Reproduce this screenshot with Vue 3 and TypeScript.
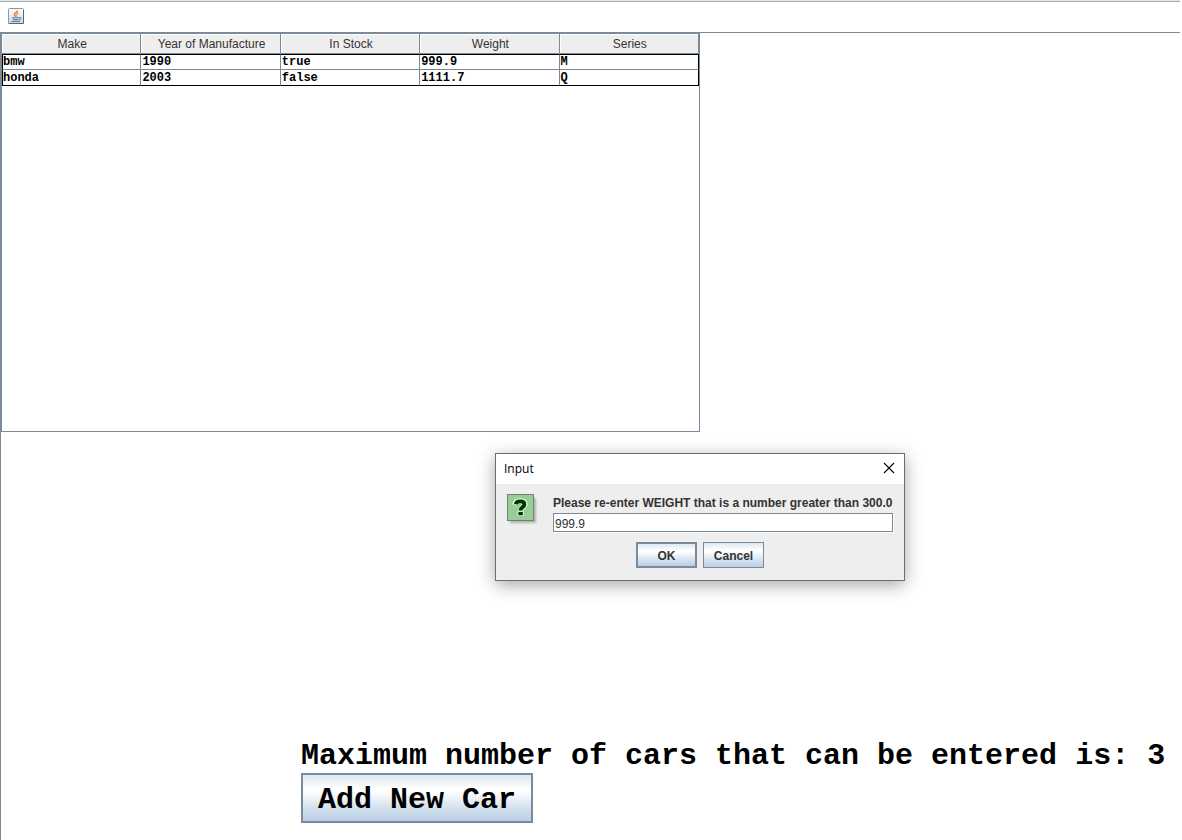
<script setup lang="ts">
import { ref } from 'vue'

interface Car {
  make: string
  year: number
  inStock: boolean
  weight: string
  series: string
}

const columns: string[] = ['Make', 'Year of Manufacture', 'In Stock', 'Weight', 'Series']

const cars: Car[] = [
  { make: 'bmw', year: 1990, inStock: true, weight: '999.9', series: 'M' },
  { make: 'honda', year: 2003, inStock: false, weight: '1111.7', series: 'Q' },
]

const maxCars = 3
const weight = ref('999.9')
</script>

<template>
  <div class="window">
    <header class="titlebar">
      <svg class="java" viewBox="0 0 16 16" aria-hidden="true">
        <defs>
          <linearGradient id="tile" x1="0" y1="0" x2="0" y2="1">
            <stop offset="0" stop-color="#ffffff" />
            <stop offset="1" stop-color="#c9d6e2" />
          </linearGradient>
        </defs>
        <rect x="0.5" y="0.5" width="15" height="15" rx="1" fill="url(#tile)" stroke="#8797a8" />
        <path d="M0.5 15.5h15V2" fill="none" stroke="#53697f" />
        <path d="M9.4 2.4C9.6 4.4 5.8 4.8 6.4 6.8C6.6 7.4 7.2 7.8 7.4 8.6" fill="none" stroke="#e07a28" stroke-width="1.5" />
        <path d="M10.6 4.6C8.6 5.4 8.2 6 8.8 6.8C9.1 7.3 8.8 7.9 8.4 8.6" fill="none" stroke="#ee9a4c" stroke-width="1.2" />
        <path d="M4 9.8h7M5 11.6h5.4M3.4 13.4h8.6M11 9.6c2.6-0.8 2.6 1.8-0.2 2.2" fill="none" stroke="#5a7590" stroke-width="1" />
      </svg>
    </header>

    <main class="content">
      <section class="scrollpane">
        <table class="cars">
          <thead>
            <tr>
              <th v-for="column in columns" :key="column" scope="col">{{ column }}</th>
            </tr>
          </thead>
          <tbody>
            <tr v-for="car in cars" :key="car.make">
              <td>{{ car.make }}</td>
              <td>{{ car.year }}</td>
              <td>{{ car.inStock }}</td>
              <td>{{ car.weight }}</td>
              <td>{{ car.series }}</td>
            </tr>
          </tbody>
        </table>
      </section>

      <footer class="actions">
        <p class="limit">Maximum number of cars that can be entered is: {{ maxCars }}</p>
        <button class="metal add" type="button">Add New Car</button>
      </footer>
    </main>

    <form class="dialog" role="dialog" aria-labelledby="dialog-title" @submit.prevent>
      <div class="dialog-bar">
        <span id="dialog-title">Input</span>
        <button class="close" type="button" aria-label="Close">
          <svg viewBox="0 0 12 12" aria-hidden="true">
            <path d="M1 1L11 11M11 1L1 11" fill="none" stroke="#000" stroke-width="1.1" />
          </svg>
        </button>
      </div>
      <div class="dialog-body">
        <svg class="question" viewBox="0 0 32 32" aria-hidden="true">
          <rect class="question-shadow" x="3" y="4" width="26" height="25" />
          <rect x="0.5" y="0.5" width="26" height="26" fill="#99cc99" stroke="#668866" />
          <g fill="none" stroke="#ccffcc">
            <path d="M8 10.6C8 7.8 10 7 13.4 7C16.8 7 18 8.4 18 10.4C18 13.2 13.6 13 13.6 17" stroke-width="5.4" />
            <path d="M13.6 17.2v4.6" stroke-width="6.4" />
          </g>
          <path d="M8.8 10.2C9.2 8 11 7.4 13.4 7.4C16.2 7.4 17.4 8.6 17.4 10.4C17.4 13 13.6 13 13.6 16.4" fill="none" stroke="#003300" stroke-width="3.8" />
          <rect x="11.4" y="18" width="4.4" height="3.2" fill="#003300" />
        </svg>
        <div class="field">
          <label for="weight">Please re-enter WEIGHT that is a number greater than 300.0</label>
          <input id="weight" v-model="weight" type="text" />
        </div>
      </div>
      <div class="dialog-buttons">
        <button class="metal ok" type="submit">OK</button>
        <button class="metal" type="button">Cancel</button>
      </div>
    </form>
  </div>
</template>

<style>
body {
  margin: 0;
  background: #fff;
}
</style>

<style scoped>
* {
  box-sizing: border-box;
}

.window {
  position: relative;
  display: flex;
  flex-direction: column;
  min-height: 100vh;
  margin-right: 2px;
  background: #fff;
  color: #333;
  font-family: "Liberation Sans", Arial, sans-serif;
  font-size: 12px;
}

.titlebar {
  height: 32px;
  padding: 7px 8px;
  border-top: 1px solid #e6e6e6;
  box-shadow: inset 0 1px #aaa;
}

.java {
  display: block;
  width: 16px;
  height: 16px;
}

.content {
  flex: 1;
  display: flex;
  flex-direction: column;
  border-top: 1px solid #7a8a99;
  border-left: 1px solid #7a8a99;
}

.scrollpane {
  width: 699px;
  max-width: 100%;
  min-height: 399px;
  border: 1px solid #7a8a99;
}

.cars {
  width: 100%;
  table-layout: fixed;
  border-collapse: separate;
  border-spacing: 0;
}

.cars th {
  height: 20px;
  padding: 1px 0 0 2px;
  border-right: 1px solid #7a8a99;
  border-bottom: 1px solid #7a8a99;
  background: #eee;
  box-shadow: inset 1px 1px #fff;
  font-weight: normal;
  line-height: 18px;
}

.cars td {
  height: 16px;
  padding: 0 1px;
  border-right: 1px solid #7a8a99;
  border-bottom: 1px solid #7a8a99;
  color: #000;
  font: bold 12px/14px "Liberation Mono", "Courier New", monospace;
}

.cars tbody tr:first-child td {
  border-top: 1px solid #000;
}

.cars tbody tr:last-child td {
  border-bottom-color: #000;
}

.cars td:first-child {
  padding-left: 0;
  border-left: 1px solid #000;
}

.cars td:last-child {
  border-right-color: #000;
}

.actions {
  margin-top: auto;
  padding: 0 0 17px 300px;
  color: #000;
  font: bold 30px/34px "Liberation Mono", "Courier New", monospace;
}

.limit {
  margin: 0;
  white-space: nowrap;
}

.metal {
  height: 26px;
  padding: 2px 9px 0;
  border: 1px solid #7a8a99;
  border-radius: 0;
  background: linear-gradient(#dde8f3 0%, #fff 30%, #fff 36%, #dbe6f1 65%, #b8cfe5 100%);
  color: #333;
  font: bold 12px/16px "Liberation Sans", Arial, sans-serif;
}

.metal.ok {
  border-width: 2px;
}

.metal.add {
  display: block;
  height: 50px;
  padding: 8px 15px 4px;
  border-width: 2px;
  color: #000;
  font: inherit;
}

.dialog {
  position: absolute;
  top: 453px;
  left: 495px;
  width: 410px;
  padding-bottom: 12px;
  border: 1px solid #6d6d6d;
  background: #eee;
  box-shadow: 0 4px 16px rgba(0, 0, 0, 0.35);
}

.dialog-bar {
  display: flex;
  align-items: center;
  justify-content: space-between;
  height: 30px;
  padding: 0 9px 0 8px;
  background: #fff;
  color: #000;
  font: 12px/16px "Open Sans", "Noto Sans", sans-serif;
}

.close {
  padding: 0 0 2px;
  border: 0;
  background: none;
}

.close svg {
  display: block;
  width: 12px;
  height: 12px;
}

.dialog-body {
  display: flex;
  gap: 14px;
  padding: 10px 11px 0;
}

.question {
  flex: none;
  width: 32px;
  height: 32px;
}

.question-shadow {
  fill: #888;
  filter: blur(1px);
  opacity: 0.6;
}

.field {
  flex: 1;
  min-width: 0;
}

.field label {
  display: block;
  height: 19px;
  font-weight: bold;
  line-height: 18px;
  white-space: nowrap;
}

.field input {
  display: block;
  width: 100%;
  height: 19px;
  padding: 2px 1px 0;
  border: 1px solid #7a8a99;
  border-radius: 0;
  outline: 0;
  background: #fff;
  box-shadow: 1px 1px #fff;
  color: #333;
  font: 12px/16px "Liberation Sans", Arial, sans-serif;
}

.dialog-buttons {
  display: grid;
  grid-template-columns: 61px 61px;
  justify-content: center;
  gap: 6px;
  margin-top: 10px;
}
</style>
